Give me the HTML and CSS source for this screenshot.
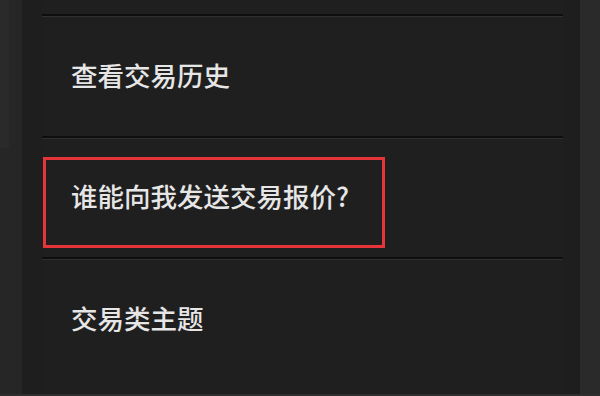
FILE: index.html
```html
<!DOCTYPE html>
<html lang="zh-CN">
<head>
<meta charset="utf-8">
<link rel="stylesheet" href="styles.css">
</head>
<body>
<div class="screen">
  <div class="left-strip"><div class="left-strip-top"></div></div>
  <div class="gutter"></div>
  <div class="panel">
    <div class="row"><span class="label">查看交易历史</span></div>
    <div class="row">
      <span class="label">谁能向我发送交易报价?</span>
      <div class="highlight"></div>
    </div>
    <div class="row last"><span class="label">交易类主题</span></div>
  </div>
  <div class="gutter-right"></div>
  <div class="right-strip"></div>
</div>
</body>
</html>
```

FILE: styles.css
```css
html, body {
  margin: 0;
  padding: 0;
  background: #222222;
}
.screen {
  width: 600px;
  height: 396px;
  display: flex;
  overflow: hidden;
  background: #222222;
  border-bottom: 2px solid #2e2e2e;
  box-sizing: border-box;
  font-family: "Noto Sans CJK SC", "Noto Sans", sans-serif;
}
.left-strip {
  width: 22px;
  background: #262626;
  display: flex;
  flex-direction: column;
}
.left-strip-top {
  width: 9px;
  height: 148px;
  background: #2a2a2a;
}
.gutter {
  width: 20px;
  background: #1e1e1e;
}
.panel {
  width: 521px;
  background: #1f1f1f;
  padding-top: 14px;
  display: flex;
  flex-direction: column;
}
.row {
  position: relative;
  box-sizing: border-box;
  height: 121.5px;
  flex: none;
  border-top: 2px solid #0e0e0e;
  box-shadow: inset 0 1px 0 #303030;
  display: flex;
  align-items: center;
  padding-left: 29px;
  padding-bottom: 2px;
}
.label {
  color: #e6e6e6;
  font-size: 26.5px;
  font-weight: 500;
  line-height: 1;
}
.highlight {
  position: absolute;
  left: 1px;
  top: 19px;
  width: 342px;
  height: 91px;
  border: 3px solid #e5353b;
  box-sizing: border-box;
}
.gutter-right {
  width: 17px;
  background: #1e1e1e;
}
.right-strip {
  flex: 1;
  background: #2a2a2a;
}
```
